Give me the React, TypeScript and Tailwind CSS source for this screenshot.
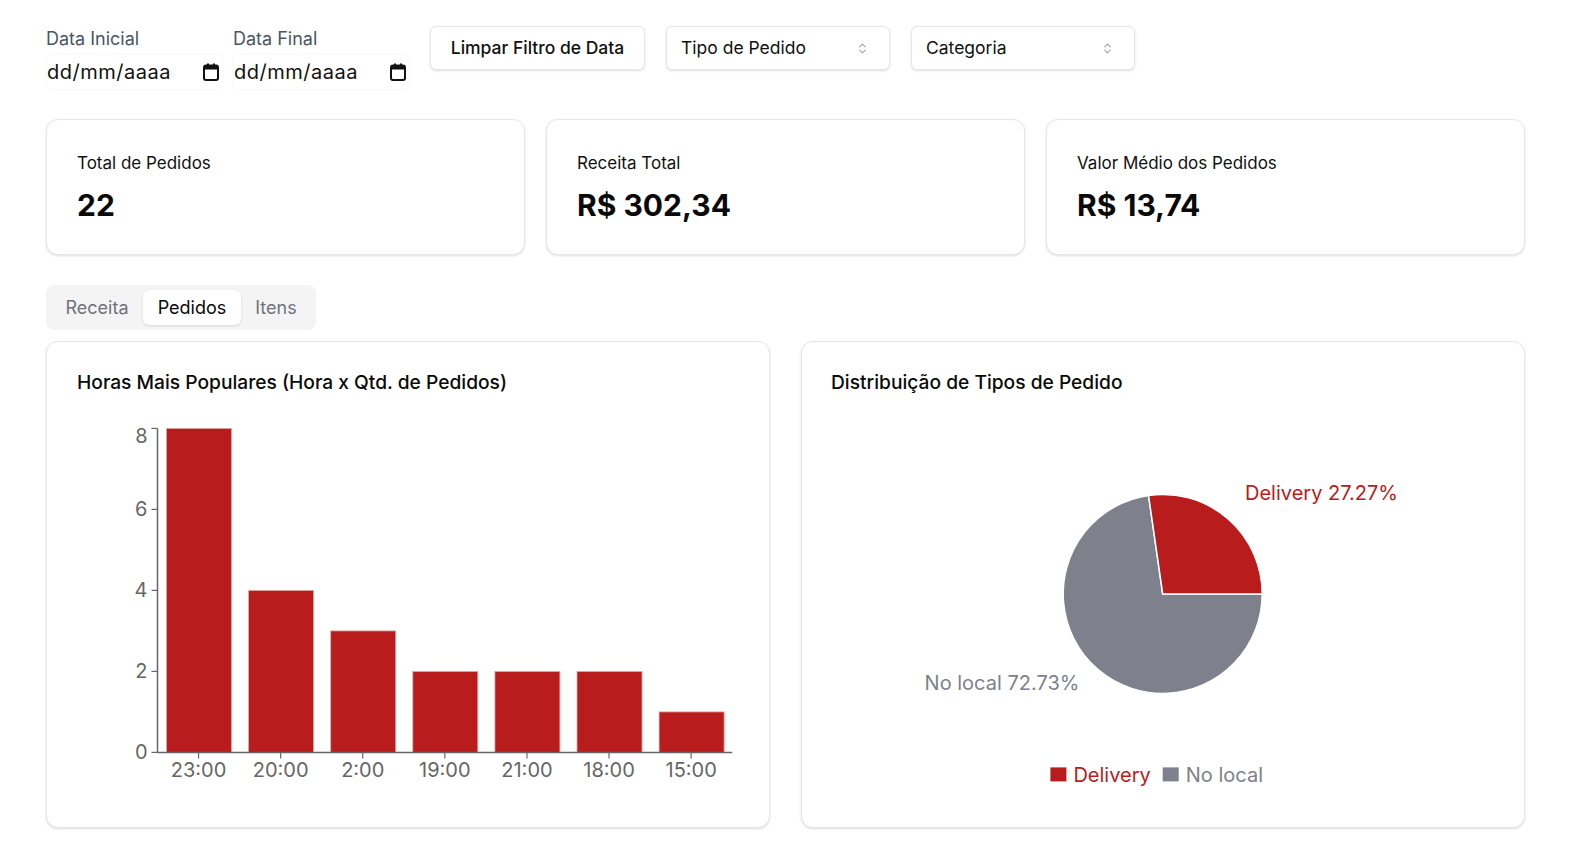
import React from "react";
import { ChevronsUpDown } from "lucide-react";

const RED = "#b91c1c";
const GRAY = "#7e818b";

function CalendarIcon() {
  return (
    <svg width="16" height="18" viewBox="0 0 16 18" fill="none">
      <rect x="1" y="2.5" width="14" height="14.5" rx="2" stroke="#111" strokeWidth="2" />
      <rect x="1" y="2.5" width="14" height="4" fill="#111" />
      <rect x="4" y="0.5" width="2" height="3" fill="#111" />
      <rect x="10" y="0.5" width="2" height="3" fill="#111" />
    </svg>
  );
}

function DateField({ label }: { label: string }) {
  return (
    <div className="flex w-[176px] flex-col">
      <span className="mt-[1px] text-[18px] leading-6 text-[#4b5563]">{label}</span>
      <div className="mt-[4px] flex h-[34px] items-center justify-between rounded-md bg-white pl-[1px] pr-[3px] shadow-[0_0_3px_rgba(0,0,0,0.06)]">
        <span className="text-[20px] tracking-[0.5px] text-[#111]">dd/mm/aaaa</span>
        <CalendarIcon />
      </div>
    </div>
  );
}

function SelectBox({ label }: { label: string }) {
  return (
    <div className="flex h-[44px] w-[224px] items-center justify-between rounded-md border border-[#e5e7eb] bg-white pl-[14px] pr-[20px] shadow-sm">
      <span className="text-[17.5px] text-[#111]">{label}</span>
      <ChevronsUpDown size={13} className="text-[#9ca3af]" />
    </div>
  );
}

function StatCard({ title, value }: { title: string; value: string }) {
  return (
    <div className="flex h-[136px] flex-col rounded-xl border border-[#e5e7eb] bg-white px-[30px] pt-[31px] shadow-sm">
      <span className="text-[17px] leading-6 text-[#111]">{title}</span>
      <span className="mt-[12px] text-[30px] font-bold leading-9 text-[#0a0a0a]">{value}</span>
    </div>
  );
}

const bars = [
  { h: "23:00", v: 8 },
  { h: "20:00", v: 4 },
  { h: "2:00", v: 3 },
  { h: "19:00", v: 2 },
  { h: "21:00", v: 2 },
  { h: "18:00", v: 2 },
  { h: "15:00", v: 1 },
];

function BarChart() {
  const x0 = 110.5;
  const yb = 349.4;
  const unit = 40.5;
  const band = 82.1;
  const xEnd = x0 + band * 7;
  return (
    <svg width="722" height="400" className="block" style={{ fontFamily: "Inter, sans-serif" }}>
      {bars.map((b, i) => (
        <rect
          key={b.h}
          x={x0 + band * i + 9}
          y={yb - b.v * unit}
          width={65}
          height={b.v * unit}
          fill={RED}
          stroke="#e4a7a7"
          strokeWidth={0.8}
        />
      ))}
      <line x1={x0} y1={yb - 8 * unit} x2={x0} y2={yb} stroke="#666" strokeWidth={1.5} />
      <line x1={x0} y1={yb} x2={xEnd} y2={yb} stroke="#666" strokeWidth={1.5} />
      {[0, 2, 4, 6, 8].map((t) => (
        <g key={t}>
          <line x1={x0 - 6} y1={yb - t * unit} x2={x0} y2={yb - t * unit} stroke="#666" strokeWidth={1.2} />
          <text
            x={x0 - 10}
            y={yb - t * unit + (t === 8 ? 15 : 7)}
            textAnchor="end"
            fontSize="20"
            fill="#666"
          >
            {t}
          </text>
        </g>
      ))}
      {bars.map((b, i) => (
        <g key={b.h + "t"}>
          <line x1={x0 + band / 2 + band * i} y1={yb} x2={x0 + band / 2 + band * i} y2={yb + 6} stroke="#666" strokeWidth={1.2} />
          <text x={x0 + band / 2 + band * i} y={374} textAnchor="middle" fontSize="20" fill="#666">
            {b.h}
          </text>
        </g>
      ))}
    </svg>
  );
}

function PieChart() {
  const cx = 360.7;
  const cy = 190.9;
  const r = 99.5;
  const a = (98.18 * Math.PI) / 180;
  const ex = cx + r * Math.cos(a);
  const ey = cy - r * Math.sin(a);
  return (
    <svg width="722" height="400" className="block" style={{ fontFamily: "Inter, sans-serif" }}>
      <path d={`M${cx},${cy} L${ex},${ey} A${r},${r} 0 1 0 ${cx + r},${cy} Z`} fill={GRAY} stroke="#fff" strokeWidth={1.5} />
      <path d={`M${cx},${cy} L${cx + r},${cy} A${r},${r} 0 0 0 ${ex},${ey} Z`} fill={RED} stroke="#fff" strokeWidth={1.5} />
      <text x={443} y={97} fontSize="20" fill={RED}>
        Delivery 27.27%
      </text>
      <text x={277.4} y={286.5} textAnchor="end" fontSize="20" fill={GRAY}>
        No local 72.73%
      </text>
      <rect x={248.4} y={364.4} width={16} height={14} fill={RED} />
      <text x={271.4} y={379} fontSize="20" fill={RED}>
        Delivery
      </text>
      <rect x={360.7} y={364.4} width={16} height={14} fill={GRAY} />
      <text x={383.8} y={379} fontSize="20" fill={GRAY}>
        No local
      </text>
    </svg>
  );
}

export default function App() {
  return (
    <div className="min-h-screen bg-white pt-[26px] font-['Inter',sans-serif]">
      <div className="ml-[46px] w-[1479px]">
        <div className="flex items-start">
          <DateField label="Data Inicial" />
          <div className="ml-[11px]">
            <DateField label="Data Final" />
          </div>
          <button className="ml-[21px] flex h-[44px] w-[215px] items-center justify-center rounded-md border border-[#e5e7eb] bg-white text-[17.5px] font-medium text-[#111] shadow-sm">
            Limpar Filtro de Data
          </button>
          <div className="ml-[21px]">
            <SelectBox label="Tipo de Pedido" />
          </div>
          <div className="ml-[21px]">
            <SelectBox label="Categoria" />
          </div>
        </div>

        <div className="mt-[30px] grid grid-cols-3 gap-[21px]">
          <StatCard title="Total de Pedidos" value="22" />
          <StatCard title="Receita Total" value="R$ 302,34" />
          <StatCard title="Valor Médio dos Pedidos" value="R$ 13,74" />
        </div>

        <div className="mt-[30px] inline-flex h-[45px] items-center rounded-lg bg-[#f4f4f5] p-[5px]">
          <div className="flex h-[35px] w-[92px] items-center justify-center text-[18px] text-[#71717a]">Receita</div>
          <div className="flex h-[35px] w-[98px] items-center justify-center rounded-md bg-white text-[18px] text-[#0a0a0a] shadow-sm">
            Pedidos
          </div>
          <div className="flex h-[35px] w-[70px] items-center justify-center text-[18px] text-[#71717a]">Itens</div>
        </div>

        <div className="mt-[11px] grid grid-cols-2 gap-[31px]">
          <div className="h-[487px] rounded-xl border border-[#e5e7eb] bg-white shadow-sm">
            <div className="px-[30px] pt-[26px] text-[19.2px] font-medium leading-7 text-[#0a0a0a]">
              Horas Mais Populares (Hora x Qtd. de Pedidos)
            </div>
            <div className="mt-[7px]">
              <BarChart />
            </div>
          </div>
          <div className="h-[487px] rounded-xl border border-[#e5e7eb] bg-white shadow-sm">
            <div className="px-[29px] pt-[26px] text-[19.2px] font-medium leading-7 text-[#0a0a0a]">
              Distribuição de Tipos de Pedido
            </div>
            <div className="mt-[7px]">
              <PieChart />
            </div>
          </div>
        </div>
      </div>
    </div>
  );
}
